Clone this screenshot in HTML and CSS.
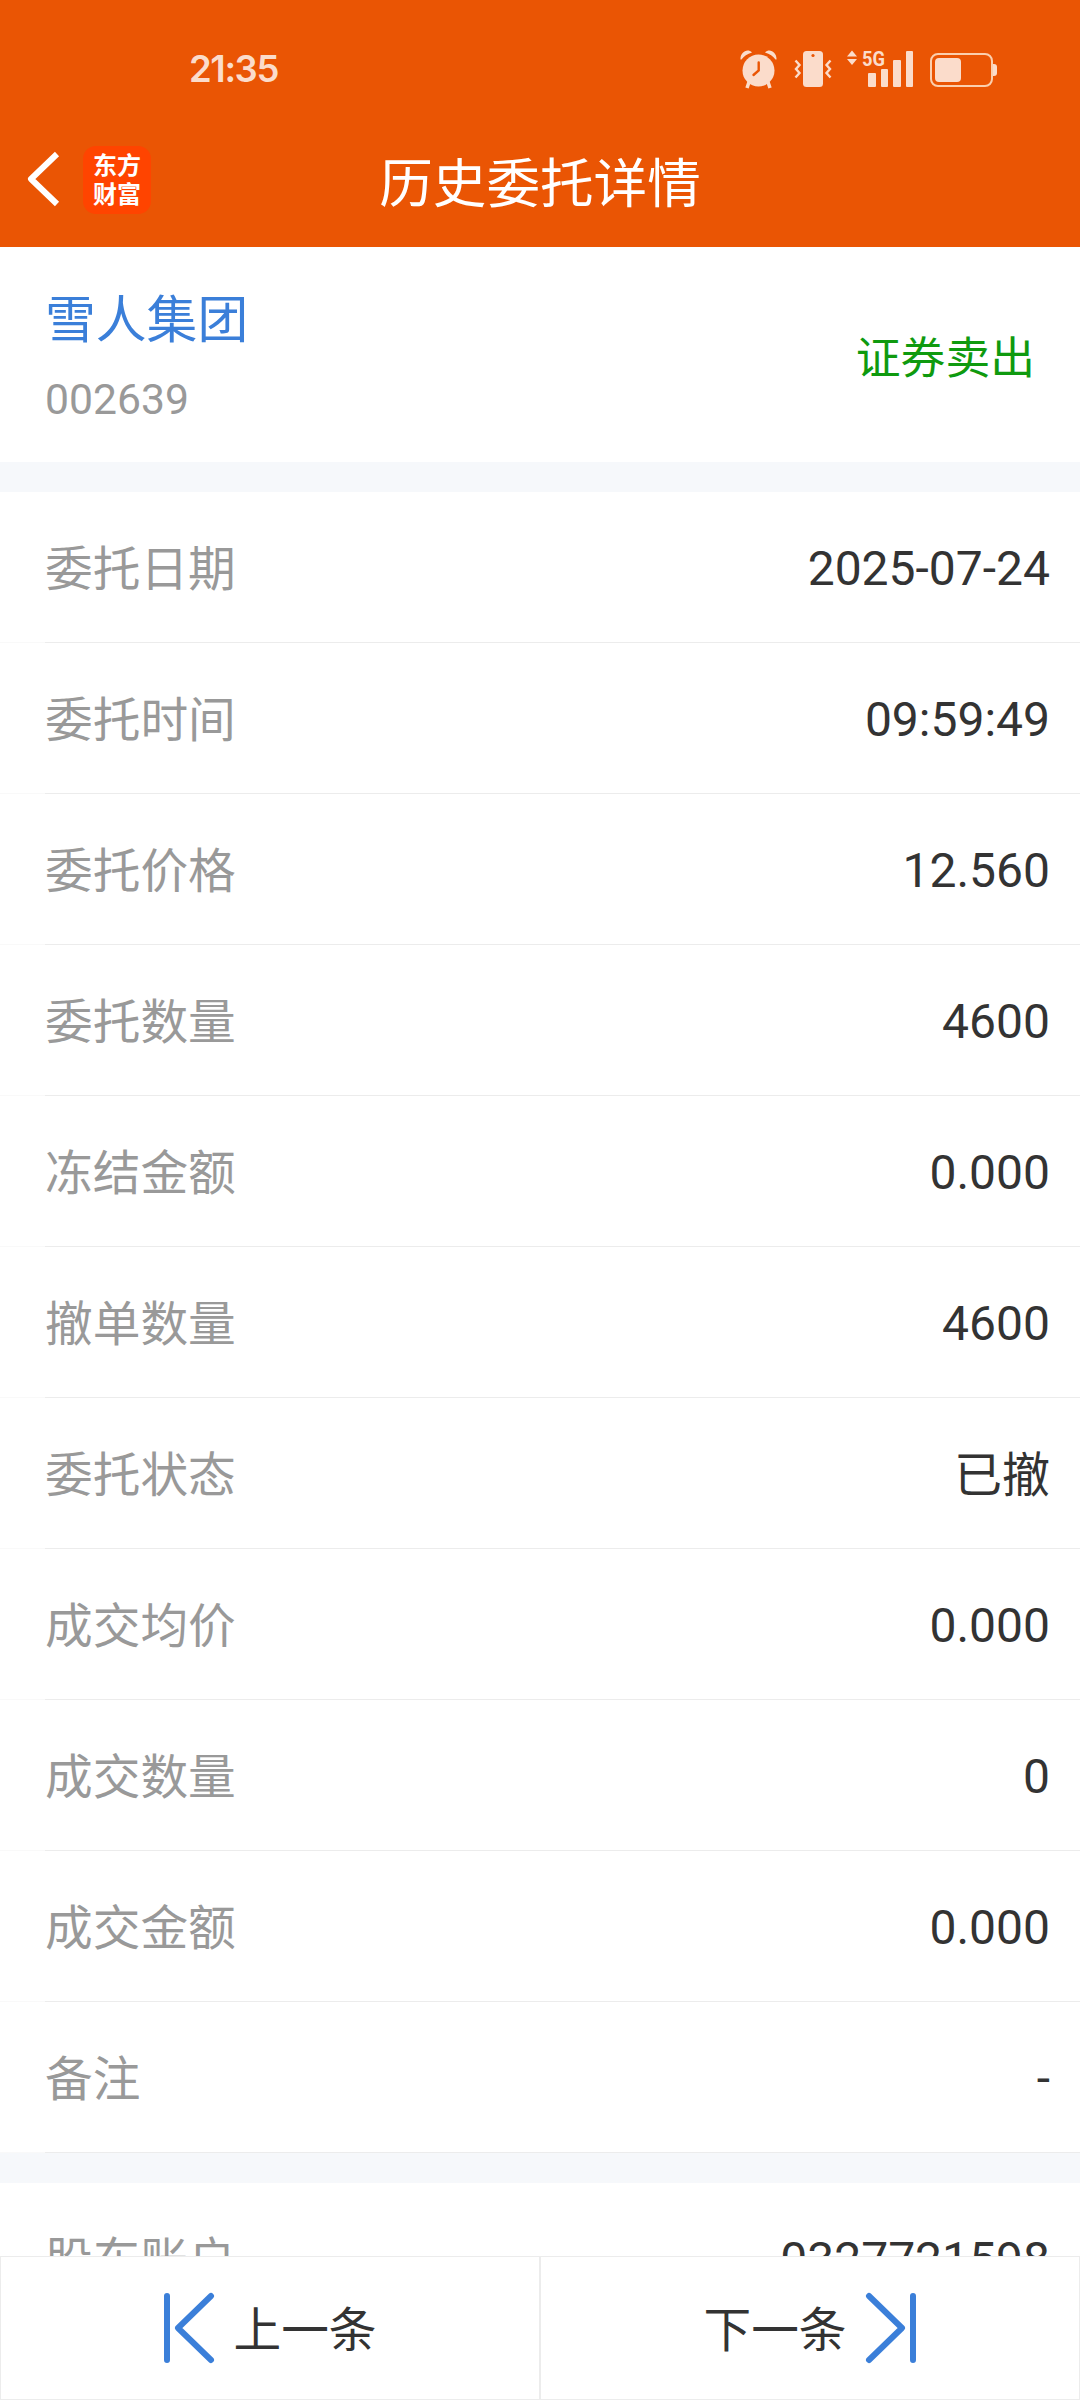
FILE: index.html
```html
<!DOCTYPE html>
<html lang="zh-CN">
<head>
<meta charset="UTF-8">
<title>历史委托详情</title>
<link rel="stylesheet" href="styles.css">
</head>
<body>
<div class="screen">
  <header class="header">
    <div class="status">
      <span class="clock">21:35</span>
      <svg class="status-icons" width="260" height="42" viewBox="0 0 260 42" fill="#fbdccb">
        <!-- alarm -->
        <g>
          <circle cx="18.500" cy="20.500" r="16"/>
          <path d="M0.500 9.500C0 3 7 -2.500 12 2.500Q5 4.500 1.500 9.500ZM36.500 9.500C37 3 30 -2.500 25 2.500Q32 4.500 35.500 9.500Z"/>
          <path d="M9 32L7 38M28 32L30 38" stroke="#fbdccb" stroke-width="3.500"/>
          <path d="M18.700 12.500V20.500L13.500 25" fill="none" stroke="#ea5504" stroke-width="2.400" stroke-linecap="round"/>
        </g>
        <!-- vibrate -->
        <rect x="63" y="1" width="20" height="36" rx="3.500"/>
        <circle cx="73" cy="5.500" r="1.600" fill="#ea5504"/>
        <path d="M55.500 10.500L59.500 15L56 19L59.500 23L55.500 27.500M90.500 10.500L86.500 15L90 19L86.500 23L90.500 27.500" fill="none" stroke="#fbdccb" stroke-width="2.400"/>
        <!-- mobile signal -->
        <path d="M107 6.500L112 0.500L117 6.500ZM107 9L112 15L117 9Z"/>
        <text x="122" y="16" class="network" textLength="23" lengthAdjust="spacingAndGlyphs">5G</text>
        <rect x="128" y="23" width="8" height="14" rx="1"/>
        <rect x="141" y="19" width="7" height="18" rx="1"/>
        <rect x="153" y="10" width="8" height="27" rx="1"/>
        <rect x="166" y="1" width="7" height="36" rx="1"/>
        <!-- battery -->
        <rect x="191" y="4" width="61" height="32" rx="7" fill="none" stroke="#fbcfae" stroke-width="2"/>
        <rect x="195" y="8" width="26" height="24" rx="4"/>
        <path d="M253 14H254Q257 14 257 17V23Q257 26 254 26H253Z"/>
      </svg>
    </div>
    <div class="nav">
      <svg class="back" width="36" height="60" viewBox="0 0 36 60" fill="none" stroke="#fff" stroke-width="6">
        <path d="M32 5L6 30L32 55" stroke-linecap="butt" stroke-linejoin="round"/>
      </svg>
      <div class="logo"><span>东方</span><span>财富</span></div>
      <h1 class="title">历史委托详情</h1>
    </div>
  </header>

  <section class="stock">
    <div class="stock-info">
      <div class="stock-name">雪人集团</div>
      <div class="stock-code">002639</div>
    </div>
    <div class="side">证券卖出</div>
  </section>

  <main class="details">
    <dl class="list">
      <div class="row"><dt>委托日期</dt><dd>2025-07-24</dd></div>
      <div class="row"><dt>委托时间</dt><dd>09:59:49</dd></div>
      <div class="row"><dt>委托价格</dt><dd>12.560</dd></div>
      <div class="row"><dt>委托数量</dt><dd>4600</dd></div>
      <div class="row"><dt>冻结金额</dt><dd>0.000</dd></div>
      <div class="row"><dt>撤单数量</dt><dd>4600</dd></div>
      <div class="row"><dt>委托状态</dt><dd class="state">已撤</dd></div>
      <div class="row"><dt>成交均价</dt><dd>0.000</dd></div>
      <div class="row"><dt>成交数量</dt><dd>0</dd></div>
      <div class="row"><dt>成交金额</dt><dd>0.000</dd></div>
      <div class="row"><dt>备注</dt><dd>-</dd></div>
    </dl>
    <dl class="list">
      <div class="row"><dt>股东账户</dt><dd>0327721598</dd></div>
    </dl>
  </main>

  <footer class="pager">
    <button class="page-btn" type="button">
      <svg width="52" height="72" viewBox="0 0 52 72" fill="none" stroke="#3b7fd9" stroke-width="6" stroke-linecap="round" stroke-linejoin="round"><path d="M4 4V68M48 4L15 36L48 68"/></svg>
      <span>上一条</span>
    </button>
    <button class="page-btn" type="button">
      <span>下一条</span>
      <svg width="52" height="72" viewBox="0 0 52 72" fill="none" stroke="#3b7fd9" stroke-width="6" stroke-linecap="round" stroke-linejoin="round"><path d="M48 4V68M4 4L37 36L4 68"/></svg>
    </button>
  </footer>
</div>
</body>
</html>
```
FILE: styles.css
```css
* { box-sizing: border-box; }

body {
  margin: 0;
  font-family: Roboto, "Noto Sans CJK SC", sans-serif;
  color: #333;
  background: #fff;
}

.screen {
  display: flex;
  flex-direction: column;
  width: 1080px;
  height: 2400px;
  overflow: hidden;
}

.header {
  flex: none;
  height: 247px;
  background: #ea5504;
  color: #fff;
}

.status {
  display: flex;
  justify-content: space-between;
  align-items: center;
  height: 138px;
  padding: 3px 80px 0 189px;
}

.clock {
  padding-bottom: 4px;
  font: 600 36.5px/42px Inter, sans-serif;
  letter-spacing: -1.4px;
  color: #fbdccb;
}

.status-icons { overflow: visible; }
.network { font: 700 21px Roboto, sans-serif; }

.nav {
  display: grid;
  grid-template-columns: 83px 68px 1fr 151px;
  align-items: center;
  height: 84px;
}

.back { margin: 0 0 2px 25px; }

.logo {
  display: flex;
  flex-direction: column;
  align-items: center;
  justify-content: center;
  height: 68px;
  padding-bottom: 5px;
  border-radius: 13px;
  background: #ff4400;
  font: 700 24px/29px "Noto Sans CJK SC", sans-serif;
}

.title {
  margin: 0;
  padding-top: 10px;
  text-align: center;
  font-size: 53.6px;
  font-weight: 400;
  line-height: 74px;
}

.stock {
  flex: none;
  display: flex;
  justify-content: space-between;
  align-items: center;
  height: 215px;
  padding: 0 45px;
}

.stock-info { padding-top: 9px; }

.stock-name {
  font-size: 50.8px;
  line-height: 80px;
  color: #3b7fd9;
}

.stock-code {
  font-size: 42.7px;
  line-height: 77px;
  color: #999;
}

.side {
  font-size: 44.8px;
  color: #0f9a0f;
}

.details {
  flex: 1;
  min-height: 0;
  overflow: hidden;
  background: #f6f8fb;
}

.list {
  margin: 30px 0 0;
  background: #fff;
}

.row {
  display: flex;
  justify-content: space-between;
  align-items: center;
  height: 151px;
  padding: 0 30px 0 45px;
  font-size: 48px;
  background: linear-gradient(90deg, #f9f9f9 45px, #ececec 45px) bottom / 100% 1px no-repeat;
}

.row dt {
  padding-bottom: 4px;
  font-size: 47.7px;
  color: #999;
}

.row dd {
  margin: 0;
  padding-top: 1px;
}

.row .state { padding: 0 0 5px; }

.pager {
  flex: none;
  display: flex;
  height: 144px;
}

.page-btn {
  flex: 1;
  display: flex;
  align-items: center;
  justify-content: center;
  gap: 18px;
  padding: 0 0 1px;
  border: 1px solid #ececec;
  background: #fff;
  color: #333;
  font-family: inherit;
  font-size: 47.7px;
}

.page-btn span { padding-bottom: 2px; }
```
